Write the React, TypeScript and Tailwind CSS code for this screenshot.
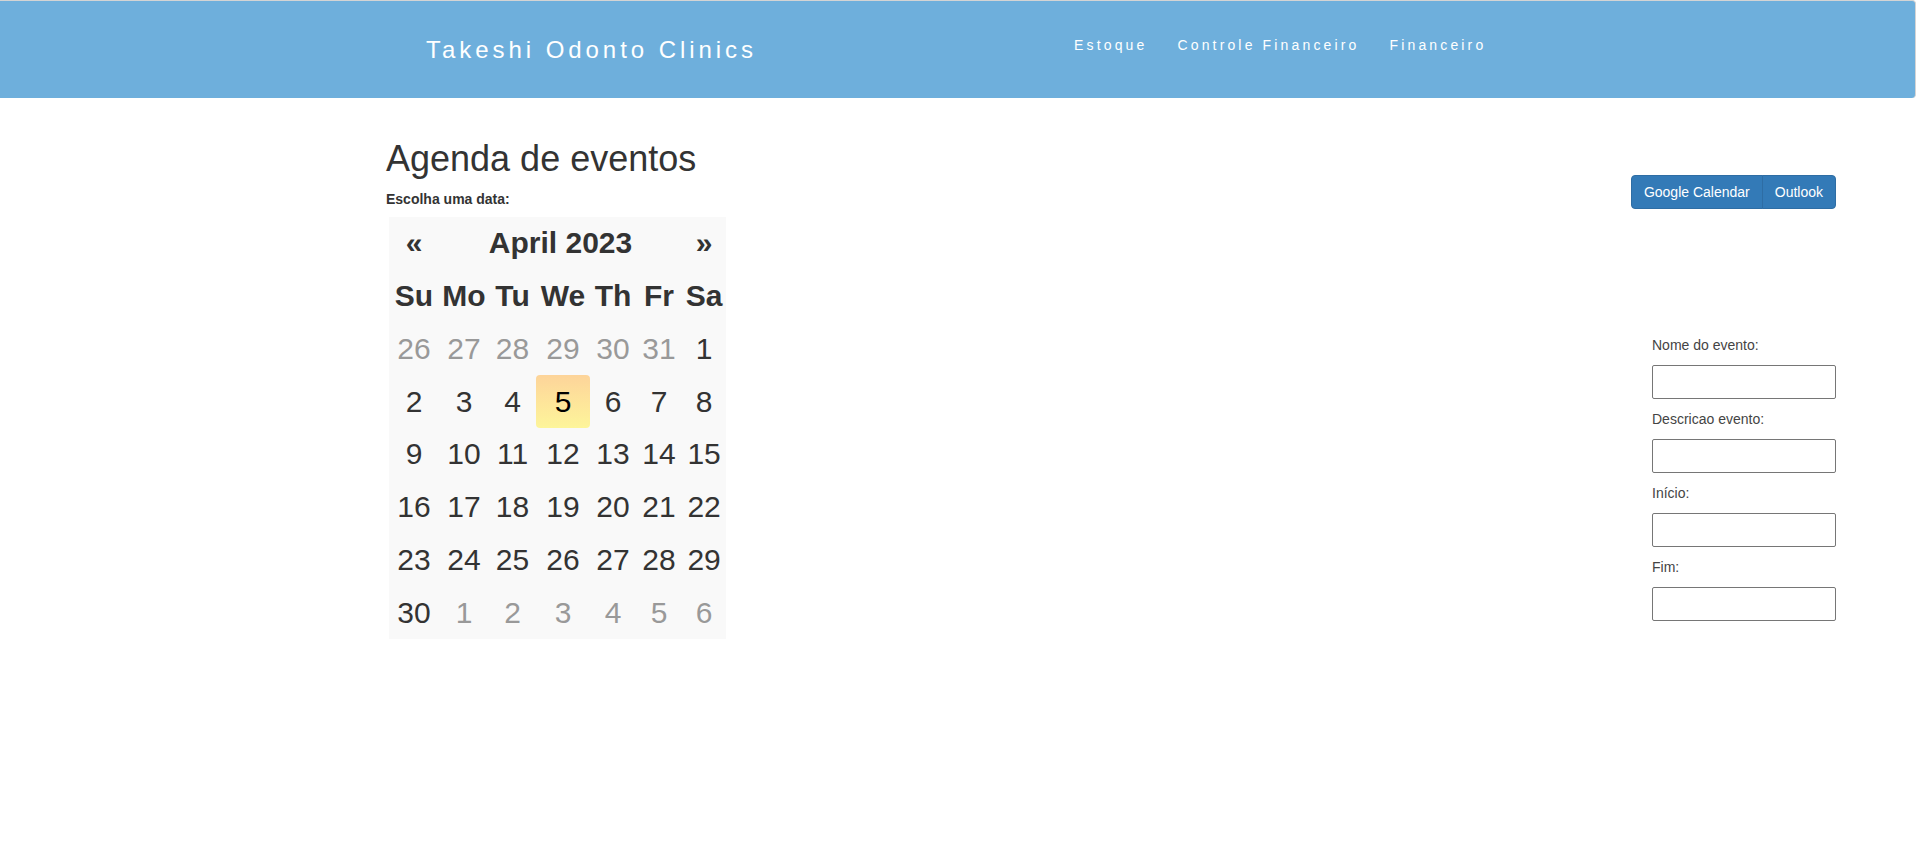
const navLinks = ['Estoque', 'Controle Financeiro', 'Financeiro'];

const weekDays = ['Su', 'Mo', 'Tu', 'We', 'Th', 'Fr', 'Sa'];

// column widths taken from the datepicker's auto layout
const colWidths = ['w-[50px]', 'w-[50px]', 'w-[47px]', 'w-[54px]', 'w-[46px]', 'w-[46px]', 'w-[44px]'];

// each day: [number, is it from another month]
const weeks: [number, boolean][][] = [
  [[26, true], [27, true], [28, true], [29, true], [30, true], [31, true], [1, false]],
  [[2, false], [3, false], [4, false], [5, false], [6, false], [7, false], [8, false]],
  [[9, false], [10, false], [11, false], [12, false], [13, false], [14, false], [15, false]],
  [[16, false], [17, false], [18, false], [19, false], [20, false], [21, false], [22, false]],
  [[23, false], [24, false], [25, false], [26, false], [27, false], [28, false], [29, false]],
  [[30, false], [1, true], [2, true], [3, true], [4, true], [5, true], [6, true]],
];

const fields = ['Nome do evento:', 'Descricao evento:', 'Início:', 'Fim:'];

function Navbar() {
  return (
    <nav className="w-[1916px] h-[98px] bg-[#6eafdc] border-t border-r border-[#d4d4d4] rounded-tr-[4px] rounded-br-[4px] flex items-start pt-[35px] pl-[426px]">
      <a className="text-white text-[24px] leading-[28px] tracking-[3.95px] whitespace-nowrap">
        Takeshi Odonto Clinics
      </a>
      <ul className="flex ml-[302px] -mt-px">
        {navLinks.map((link) => (
          <li key={link}>
            <a className="block px-[15px] text-white text-[14px] leading-[20px] tracking-[3.15px] whitespace-nowrap">
              {link}
            </a>
          </li>
        ))}
      </ul>
    </nav>
  );
}

function Calendar() {
  return (
    <div className="ml-[3px] bg-[#f9f9f9] w-[337px]">
      <table className="table-fixed w-[337px] border-collapse text-[30px] text-[#333]">
        <colgroup>
          {colWidths.map((w, i) => (
            <col key={i} className={w} />
          ))}
        </colgroup>
        <thead>
          <tr className="h-[52.75px] font-bold">
            <th>«</th>
            <th colSpan={5}>April 2023</th>
            <th>»</th>
          </tr>
          <tr className="h-[52.75px] font-bold">
            {weekDays.map((d) => (
              <th key={d}>{d}</th>
            ))}
          </tr>
        </thead>
        <tbody>
          {weeks.map((week, i) => (
            <tr key={i} className="h-[52.75px]">
              {week.map(([day, old], j) => {
                const selected = i === 1 && day === 5;
                return (
                  <td
                    key={j}
                    className={
                      selected
                        ? 'text-center text-black rounded-[4px] bg-gradient-to-b from-[#fdd49a] to-[#fdf59a]'
                        : old
                          ? 'text-center text-[#999]'
                          : 'text-center'
                    }
                  >
                    {day}
                  </td>
                );
              })}
            </tr>
          ))}
        </tbody>
      </table>
    </div>
  );
}

export default function App() {
  return (
    <div className="min-h-[868px] bg-white text-[#333]" style={{ fontFamily: '"Liberation Sans", Arial, sans-serif' }}>
      <Navbar />

      <div className="flex justify-between items-start pl-[386px] pr-[84px]">
        {/* left: calendar */}
        <div className="pt-[41px]">
          <h1 className="text-[36px] leading-[1.1] font-normal mb-[10px]">Agenda de eventos</h1>
          <label className="block text-[14px] leading-[20px] font-bold mb-[8px]">Escolha uma data:</label>
          <Calendar />
        </div>

        {/* right: export buttons and form */}
        <div className="pt-[77px] flex flex-col items-end">
          <div className="flex">
            <button className="h-[34px] px-[12px] text-[14px] text-white bg-[#337ab7] border border-[#2e6da4] rounded-l-[4px]">
              Google Calendar
            </button>
            <button className="h-[34px] px-[12px] -ml-px text-[14px] text-white bg-[#337ab7] border border-[#2e6da4] rounded-r-[4px]">
              Outlook
            </button>
          </div>

          <form className="w-[184px] mt-[126px] flex flex-col">
            {fields.map((f) => (
              <div key={f} className="mb-[10px]">
                <label className="block text-[14px] leading-[20px] text-[#444] mb-[10px]">{f}</label>
                <input type="text" className="block w-full h-[34px] bg-white border border-[#767676] rounded-[2px]" />
              </div>
            ))}
          </form>
        </div>
      </div>
    </div>
  );
}
